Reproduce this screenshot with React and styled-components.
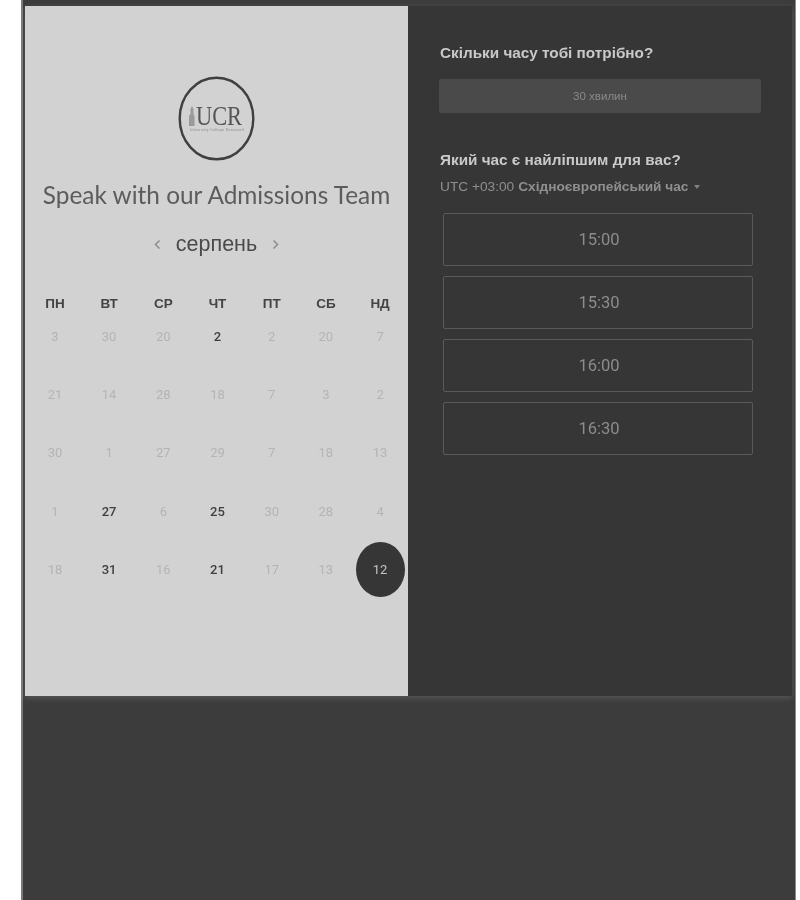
import React from 'react';
import styled, { createGlobalStyle } from 'styled-components';

const Global = createGlobalStyle`
  html, body { margin: 0; padding: 0; background: #fff; }
  #root { width: 800px; height: 900px; overflow: hidden; }
  * { box-sizing: border-box; }
`;

const Stage = styled.main`
  width: 775px;
  height: 900px;
  margin-left: 21px;
  padding: 6px 3px 0 2px;
  background: #3c3c3c;
  border-left: 2px solid #7a7a7a;
  border-right: 1px solid #8a8a8a;
  font-family: "Liberation Sans", Arial, sans-serif;
  filter: blur(0.5px);
`;

const Card = styled.section`
  display: grid;
  grid-template-columns: 383px 384px;
  height: 690px;
  width: 767px;
  box-shadow: 0 2px 6px rgba(255, 255, 255, 0.14);
`;

const LeftPanel = styled.div`
  display: flex;
  flex-direction: column;
  align-items: center;
  padding-top: 70px;
  background: #d2d2d2;
`;

const Logo = styled.svg`
  display: block;
  width: 77px;
  height: 85px;
  flex: none;
`;

const Title = styled.h1`
  margin: 18px 0 0;
  font-family: Lato, sans-serif;
  font-weight: 400;
  font-size: 24.4px;
  line-height: 32px;
  color: #5c5c5c;
  white-space: nowrap;
`;

const MonthRow = styled.div`
  display: flex;
  align-items: center;
  justify-content: center;
  gap: 15px;
  margin-top: 18px;
  height: 30px;
  font-size: 21.5px;
  color: #4a4a4a;
`;

const Chevron = styled.svg`
  width: 7px;
  height: 11px;
  fill: none;
  stroke: #8e8e8e;
  stroke-width: 1.5;
`;

const WeekRow = styled.div`
  display: grid;
  grid-template-columns: repeat(7, 54.2px);
  margin: 34px 0 0 2px;
  height: 20px;
  justify-items: center;
  align-items: center;
`;

const WeekDay = styled.div`
  font-size: 13.5px;
  font-weight: 700;
  color: #444;
`;

const Calendar = styled.div`
  display: grid;
  grid-template-columns: repeat(7, 54.2px);
  grid-auto-rows: 58.4px;
  margin: -6px 0 0 2px;
  justify-items: center;
  align-items: center;
`;

const Day = styled.div`
  display: flex;
  align-items: center;
  justify-content: center;
  width: 49px;
  height: 55px;
  border-radius: 50%;
  font-family: Roboto, sans-serif;
  font-size: 13px;
  font-weight: ${p => (p.$active ? 500 : 400)};
  color: ${p => (p.$selected ? '#c4c4c4' : p.$active ? '#3e3e3e' : '#b4b4b4')};
  background: ${p => (p.$selected ? '#363636' : 'transparent')};
`;

const RightPanel = styled.div`
  display: flex;
  flex-direction: column;
  align-items: flex-start;
  padding: 37px 31px 0 31px;
  background: #363636;
`;

const Heading = styled.h2`
  margin: 0;
  padding-left: 1px;
  font-size: 15.3px;
  line-height: 20px;
  font-weight: 700;
  color: #c9c9c9;
  white-space: nowrap;
`;

const DurationBox = styled.div`
  display: flex;
  align-items: center;
  justify-content: center;
  width: 322px;
  height: 34px;
  margin: 16px 0 37px;
  border-radius: 2px;
  background: #4a4a4a;
  font-size: 11.5px;
  color: #8a8a8a;
`;

const Zone = styled.div`
  display: flex;
  align-items: center;
  margin-top: 6px;
  padding-left: 1px;
  height: 20px;
  font-size: 13.7px;
  color: #8f8f8f;
  white-space: nowrap;
  strong { font-weight: 700; margin-left: 4px; }
`;

const Caret = styled.span`
  width: 0;
  height: 0;
  margin: 1px 0 0 6px;
  border: 3.5px solid transparent;
  border-top: 4px solid #808080;
  border-bottom: 0;
`;

const Slots = styled.div`
  display: flex;
  flex-direction: column;
  gap: 10px;
  margin: 17px 0 0 4px;
`;

const Slot = styled.div`
  display: flex;
  align-items: center;
  justify-content: center;
  width: 310px;
  height: 53px;
  padding-left: 2px;
  border: 1px solid #5a5a5a;
  border-radius: 2px;
  font-family: Roboto, sans-serif;
  font-size: 16.5px;
  color: #8c8c8c;
`;

const weeks = [
  [[3], [30], [20], [2, 1], [2], [20], [7]],
  [[21], [14], [28], [18], [7], [3], [2]],
  [[30], [1], [27], [29], [7], [18], [13]],
  [[1], [27, 1], [6], [25, 1], [30], [28], [4]],
  [[18], [31, 1], [16], [21, 1], [17], [13], [12, 0, 1]],
];

export default function App() {
  return (
    <>
      <Global />
      <Stage>
        <Card>
          <LeftPanel>
            <Logo viewBox="0 0 77 85">
              <ellipse cx="38.5" cy="42.5" rx="36.8" ry="40.8" fill="none" stroke="#3f3f3f" strokeWidth="2.4" />
              <path d="M11 50V40l1.5-2v-5l1.5-3 1.5 3v5l1 2v10z" fill="#9a9a9a" />
              <text x="18" y="49" fontFamily="Liberation Serif, serif" fontSize="28" textLength="46" lengthAdjust="spacingAndGlyphs" fill="#555">UCR</text>
              <text x="39" y="54.5" textAnchor="middle" fontFamily="Liberation Sans, sans-serif" fontSize="3.4" textLength="54" fill="#888">University College Roosevelt</text>
            </Logo>
            <Title>Speak with our Admissions Team</Title>
            <MonthRow>
              <Chevron viewBox="0 0 7 11"><path d="M5.5 1.5 1.5 5.5 5.5 9.5" /></Chevron>
              <span>серпень</span>
              <Chevron viewBox="0 0 7 11"><path d="M1.5 1.5 5.5 5.5 1.5 9.5" /></Chevron>
            </MonthRow>
            <WeekRow>
              {['ПН', 'ВТ', 'СР', 'ЧТ', 'ПТ', 'СБ', 'НД'].map(d => <WeekDay key={d}>{d}</WeekDay>)}
            </WeekRow>
            <Calendar>
              {weeks.flat().map(([n, active, selected], i) => (
                <Day key={i} $active={!!active} $selected={!!selected}>{n}</Day>
              ))}
            </Calendar>
          </LeftPanel>
          <RightPanel>
            <Heading>Скільки часу тобі потрібно?</Heading>
            <DurationBox>30 хвилин</DurationBox>
            <Heading>Який час є найліпшим для вас?</Heading>
            <Zone>UTC +03:00<strong>Східноєвропейський час</strong><Caret /></Zone>
            <Slots>
              {['15:00', '15:30', '16:00', '16:30'].map(t => <Slot key={t}>{t}</Slot>)}
            </Slots>
          </RightPanel>
        </Card>
      </Stage>
    </>
  );
}
